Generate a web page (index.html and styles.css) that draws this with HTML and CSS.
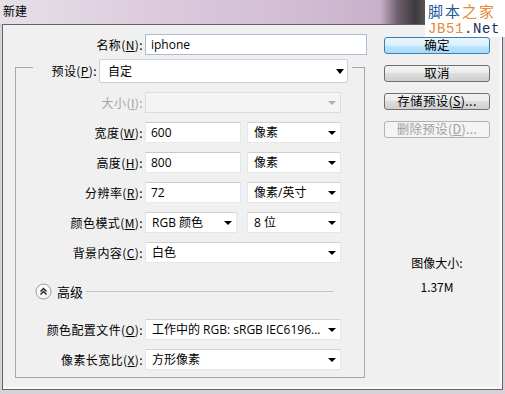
FILE: index.html
```html
<!DOCTYPE html>
<html>
<head>
    <meta charset="UTF-8">
    <title>新建</title>
    <link rel="stylesheet" href="styles.css">
</head>
<body>
<div class="titlebar">
    <span class="title">新建</span>
    <div class="watermark">
        <div class="wm-cn"><span class="blue">脚本</span><span class="orange">之家</span></div>
        <div class="wm-en"><span class="orange">JB51</span><span class="navy">.Net</span></div>
    </div>
</div>
<div class="window">
    <div class="form">
        <div class="row name-row">
            <label class="lbl">名称(<u>N</u>):</label>
            <div class="field name-field">iphone</div>
        </div>

        <div class="group">
            <div class="preset-row">
                <label class="lbl">预设(<u>P</u>):</label>
                <div class="combo preset-combo"><span>自定</span><i class="arrow"></i></div>
            </div>

            <div class="row first">
                <label class="lbl off">大小(<u>I</u>):</label>
                <div class="combo off w196"><span></span><i class="arrow"></i></div>
            </div>
            <div class="row">
                <label class="lbl">宽度(<u>W</u>):</label>
                <div class="field w96">600</div>
                <div class="combo unit"><span>像素</span><i class="arrow"></i></div>
            </div>
            <div class="row">
                <label class="lbl">高度(<u>H</u>):</label>
                <div class="field w96">800</div>
                <div class="combo unit"><span>像素</span><i class="arrow"></i></div>
            </div>
            <div class="row">
                <label class="lbl">分辨率(<u>R</u>):</label>
                <div class="field w96">72</div>
                <div class="combo unit"><span>像素/英寸</span><i class="arrow"></i></div>
            </div>
            <div class="row">
                <label class="lbl">颜色模式(<u>M</u>):</label>
                <div class="combo w92"><span>RGB 颜色</span><i class="arrow"></i></div>
                <div class="combo unit bits"><span>8 位</span><i class="arrow"></i></div>
            </div>
            <div class="row">
                <label class="lbl">背景内容(<u>C</u>):</label>
                <div class="combo w196"><span>白色</span><i class="arrow"></i></div>
            </div>

            <div class="adv">
                <svg width="17" height="17" viewBox="0 0 17 17">
                    <circle cx="8.5" cy="8.5" r="7.5" fill="#f8f8f8" stroke="#9a9a9a"/>
                    <path d="M5.5 8.5 L8.5 5.5 L11.5 8.5 M5.5 11.5 L8.5 8.5 L11.5 11.5" fill="none" stroke="#222" stroke-width="1.4"/>
                </svg>
                <span class="adv-text">高级</span>
                <div class="rule"></div>
            </div>

            <div class="row profile">
                <label class="lbl">颜色配置文件(<u>O</u>):</label>
                <div class="combo w196"><span>工作中的 RGB: sRGB IEC6196...</span><i class="arrow"></i></div>
            </div>
            <div class="row">
                <label class="lbl">像素长宽比(<u>X</u>):</label>
                <div class="combo w196"><span>方形像素</span><i class="arrow"></i></div>
            </div>
        </div>
    </div>

    <div class="side">
        <div class="btn default">确定</div>
        <div class="btn">取消</div>
        <div class="btn">存储预设(<u>S</u>)...</div>
        <div class="btn off">删除预设(<u>D</u>)...</div>
        <div class="info">
            <div>图像大小:</div>
            <div>1.37M</div>
        </div>
    </div>
</div>
</body>
</html>
```

FILE: styles.css
```css
    body {
        margin: 0;
        width: 505px;
        height: 394px;
        overflow: hidden;
        background-color: #d9d0da;
        font-family: "Noto Sans CJK SC", sans-serif;
        font-size: 12px;
        color: #000;
    }

    u {
        text-decoration: underline;
        text-underline-offset: 1px;
    }

    .titlebar {
        position: relative;
        height: 24px;
        background: linear-gradient(to right, #e6e0e8 0, #dccbdd 150px, #d2bcd4 300px, #c9b0ca 380px, #6d5f6d 398px, #3e3a3e 415px, #555 425px);
    }

    .title {
        display: block;
        padding: 4px 0 0 3px;
        line-height: 14px;
    }

    .watermark {
        position: absolute;
        top: 0;
        right: 0;
        width: 80px;
        height: 37px;
        background-color: #fff;
        padding-left: 3px;
        box-sizing: border-box;
    }

    .wm-cn {
        font-size: 15px;
        line-height: 22px;
        letter-spacing: 2px;
    }

    .wm-en {
        font-family: "Liberation Mono", monospace;
        font-size: 14px;
        line-height: 15px;
        letter-spacing: 0.6px;
    }

    .blue { color: #22579a; }
    .orange { color: #e58a3a; }
    .navy { color: #1c2a55; }

    .window {
        display: flex;
        margin-left: 2px;
        width: 499px;
        height: 364px;
        border: 1px solid #646464;
        background-color: #f0f0f0;
        box-shadow: inset -2px -2px 0 #fafafa;
    }

    .form {
        width: 364px;
    }

    .row {
        display: flex;
        align-items: center;
        height: 21px;
    }

    .lbl {
        width: 140px;
        margin-right: 2px;
        text-align: right;
        white-space: nowrap;
        line-height: 14px;
        letter-spacing: 0.4px;
    }

    .lbl.off {
        color: #a3a3a3;
    }

    .name-row {
        margin-top: 9px;
    }

    .field {
        height: 21px;
        box-sizing: border-box;
        background-color: #fff;
        border: 1px solid #e3e9ef;
        border-top-color: #c6cad0;
        padding-left: 5px;
        font-family: "Open Sans", "Noto Sans CJK SC", sans-serif;
        line-height: 19px;
    }

    .name-field {
        width: 222px;
        border: 1px solid #a9bcd4;
    }

    .w96 { width: 96px; }
    .w92 { width: 92px; }
    .w196 { width: 196px; }

    .group {
        margin: 12px 0 0 12px;
        width: 350px;
        box-sizing: border-box;
        border: 1px solid #a8a8a8;
        padding-bottom: 7px;
    }

    .group .lbl {
        width: 127px;
    }

    .preset-row {
        display: flex;
        align-items: center;
        width: 319px;
        height: 24px;
        margin: -9px 0 0 17px;
        padding: 0 4px;
        box-sizing: border-box;
        background-color: #f0f0f0;
    }

    .group .preset-row .lbl {
        width: 60px;
    }

    .combo {
        display: flex;
        align-items: center;
        height: 21px;
        box-sizing: border-box;
        background-color: #fff;
        border: 1px solid #e6e6e6;
        border-top-color: #d2d2d2;
        padding: 0 4px 0 6px;
        font-family: "Open Sans", "Noto Sans CJK SC", sans-serif;
        white-space: nowrap;
        overflow: hidden;
    }

    .combo span {
        flex: 1;
        line-height: 19px;
    }

    .preset-combo {
        width: 249px;
        height: 24px;
        border: 1px solid #cfcfcf;
        border-radius: 2px;
        padding: 0 3px 0 8px;
    }

    .unit {
        width: 94px;
        margin-left: 6px;
    }

    .bits {
        margin-left: 10px;
    }

    .combo.off {
        background-color: #f4f4f4;
        border-color: #dcdcdc;
    }

    .arrow {
        width: 0;
        height: 0;
        border-left: 4px solid transparent;
        border-right: 4px solid transparent;
        border-top: 4px solid #000;
    }

    .preset-combo .arrow {
        border-left-width: 4.5px;
        border-right-width: 4.5px;
        border-top-width: 5px;
    }

    .combo.off .arrow {
        border-top-color: #b0b0b0;
    }

    .row.first {
        margin-top: 9px;
    }

    .row + .row {
        margin-top: 9px;
    }

    .adv {
        display: flex;
        align-items: center;
        height: 17px;
        margin: 20px 0 0 19px;
    }

    .adv-text {
        margin-left: 5px;
        font-size: 13px;
        line-height: 16px;
    }

    .rule {
        flex: 1;
        height: 1px;
        background-color: #c4c4c4;
        margin: 0 30px 0 3px;
    }

    .row.profile {
        margin-top: 19px;
    }

    .side {
        display: flex;
        flex-direction: column;
        width: 106px;
        margin-left: 17px;
        padding-top: 12px;
    }

    .btn {
        height: 17px;
        box-sizing: border-box;
        margin-bottom: 11px;
        border: 1px solid #707070;
        border-radius: 3px;
        background: linear-gradient(#f2f2f2 0, #ebebeb 50%, #dddddd 50%, #cfcfcf 100%);
        text-align: center;
        line-height: 14px;
        font-size: 12.5px;
        letter-spacing: 0.3px;
    }

    .btn.default {
        border-color: #3c7fb1;
        background: linear-gradient(#eaf6fd 0, #d9f0fc 50%, #bee6fd 50%, #a7d9f5 100%);
    }

    .btn.off {
        color: #a0a0a0;
        border-color: #adb2b5;
        background: #f4f4f4;
    }

    .info {
        margin-top: 107px;
        text-align: center;
        line-height: 14px;
    }

    .info div + div {
        margin-top: 10px;
    }
```
